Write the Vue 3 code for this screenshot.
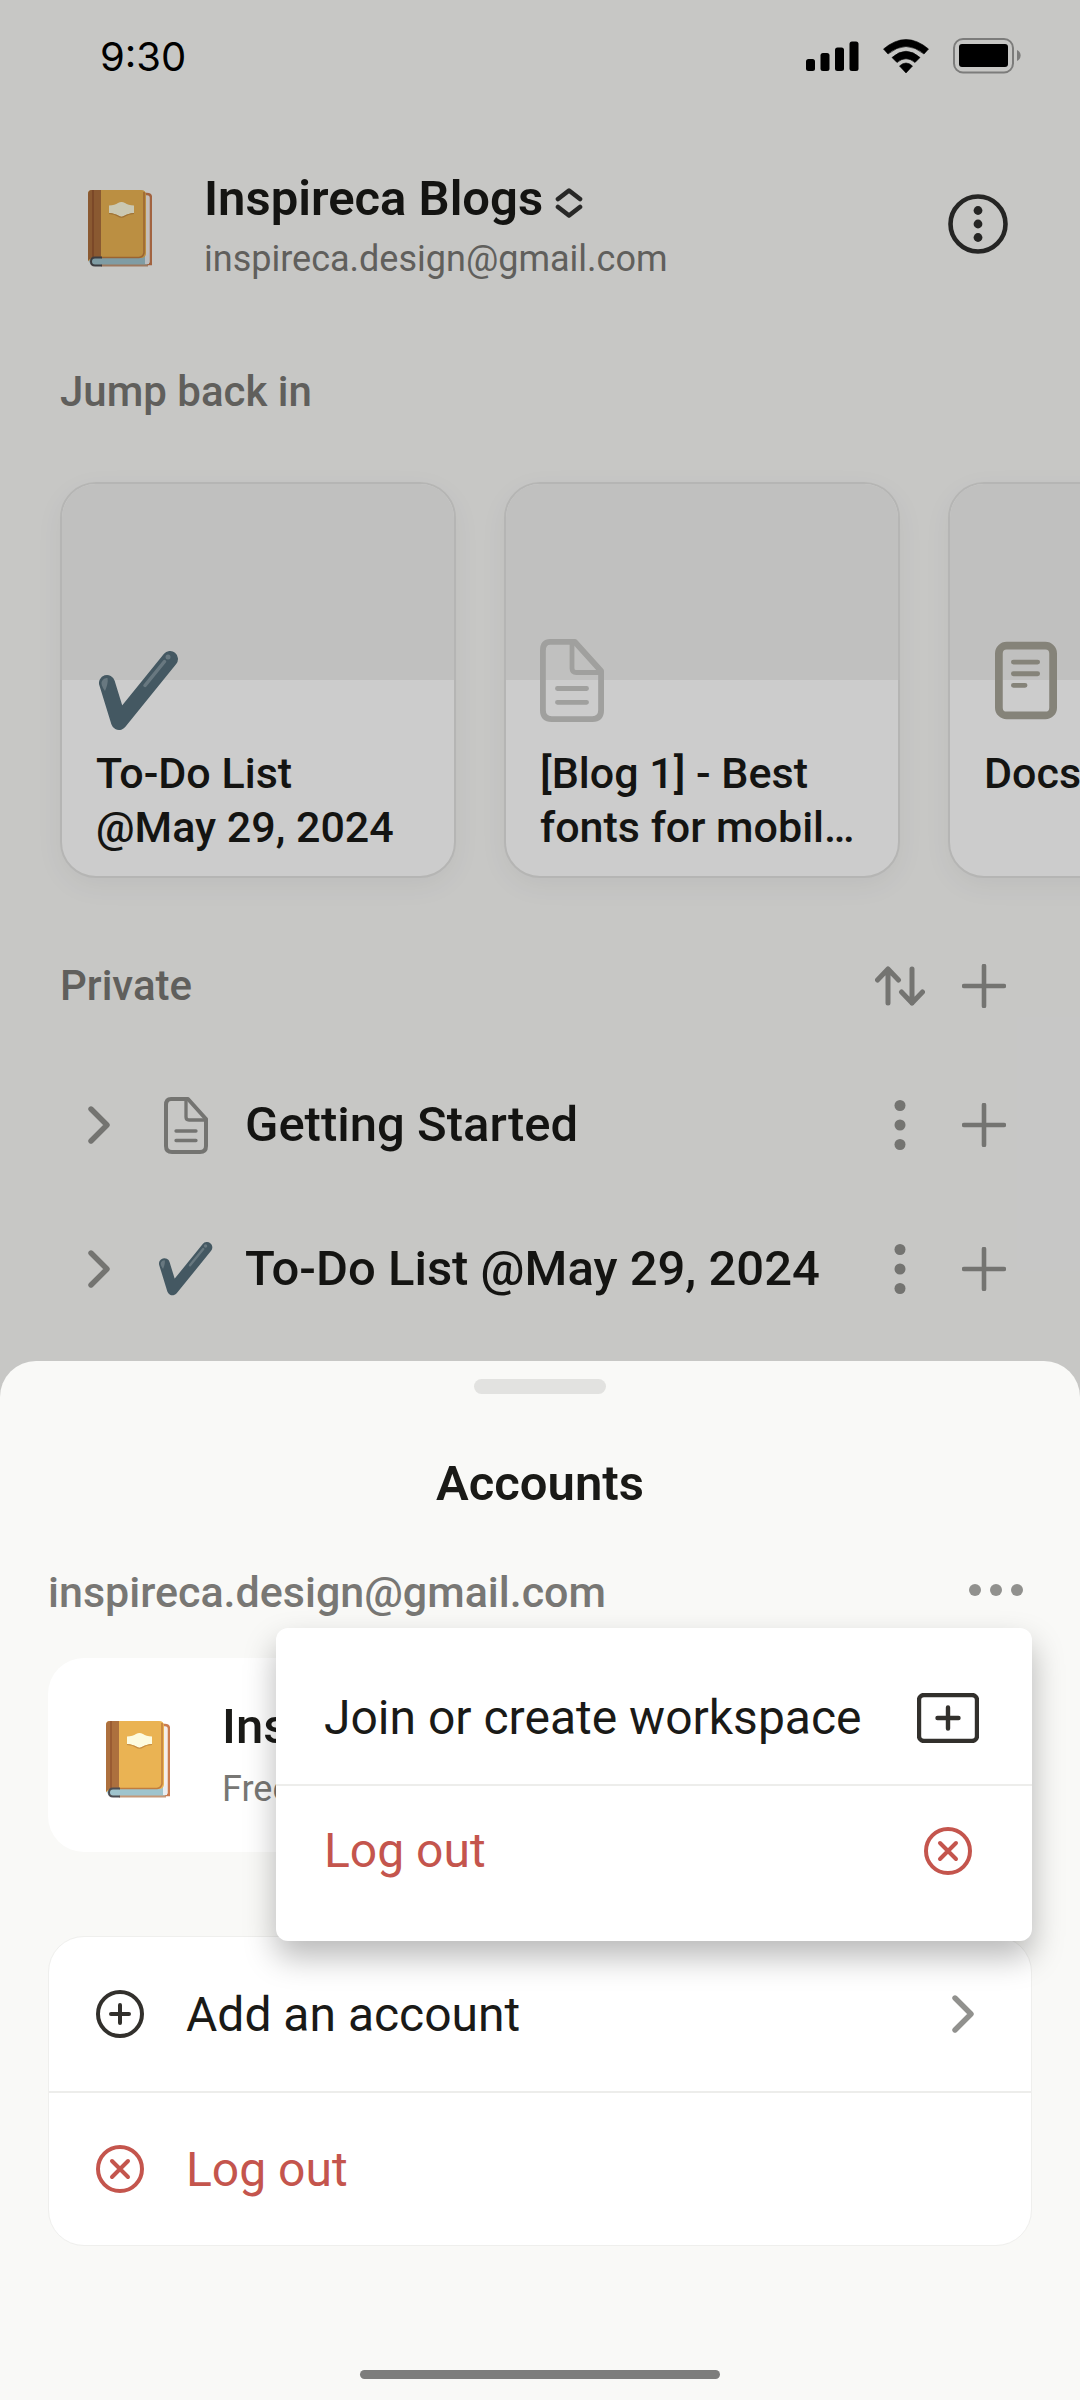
<script setup>
import { ref } from 'vue'

const email = 'inspireca.design@gmail.com'
const recents = [
  { icon: 'check', title: 'To-Do List @May 29, 2024' },
  { icon: 'page', title: '[Blog 1] - Best fonts for mobile apps' },
  { icon: 'docs', title: 'Docs' }
]
const pages = [
  { icon: 'page', title: 'Getting Started' },
  { icon: 'check', title: 'To-Do List @May 29, 2024' }
]
const menuOpen = ref(true)
</script>

<template>
  <svg class="sprite" aria-hidden="true">
    <symbol id="book" viewBox="0 0 64 77">
      <path d="M54 4h5q4 0 4 4v66H8" fill="#f5eee9" stroke="#cb7c50" stroke-width="2.5" />
      <path d="M6 66h53v9H6q-5 0-5-5t5-4z" fill="#9fc4cd" />
      <path d="M57 66q3-1 4-4v12h-4z" fill="#e8edf1" />
      <path d="M13 75.500H60" stroke="#c59878" stroke-width="2" />
      <path d="M4 0h49q5 0 5 5v58q0 5-5 5H6L0 71V4q0-4 4-4z" fill="#eab353" />
      <path d="M56 2v61q-1 4-5 4.500H13" fill="none" stroke="#c17d3f" stroke-width="1.500" />
      <path d="M4 0h9v68H7q-7 0-7 4V4q0-4 4-4z" fill="#ad703e" />
      <path d="M5 0v67" stroke="#95552f" stroke-width="1.500" />
      <path d="M14 67.500H7q-4 0-4 4t4 4h7" fill="none" stroke="#4c4d52" stroke-width="2" />
      <path d="M21 15.500Q27 15 30 13Q33.500 11 37 13Q40 15 46 15.500V23Q40 23.500 37 25.500Q33.500 28 30 25.500Q27 23.500 21 23Z" fill="#fdfbdf" />
      <path d="M21 23.500Q27 24 30 26Q33.500 28.500 37 26Q40 24 46 23.500" fill="none" stroke="#c58d42" stroke-width="1.200" />
    </symbol>
    <symbol id="check" viewBox="0 0 80 80">
      <path d="M8 32L20 71L71 8" fill="none" stroke="#566f7b" stroke-width="16" stroke-linecap="round" stroke-linejoin="round" />
      <path d="M46 34.500L65.500 10.500" stroke="#8397a0" stroke-width="3.500" stroke-linecap="round" />
      <circle cx="69" cy="6" r="2.500" fill="#8397a0" />
      <path d="M8.500 27q1 5-2.500 13Q1 33 3 30q2-3.500 5.500-3z" fill="#8397a0" />
    </symbol>
    <symbol id="page" viewBox="0 0 44 57">
      <path d="M7 2H24L42 22V49q0 6-6 6H8q-6 0-6-6V8q0-6 5-6z" fill="none" stroke="currentColor" stroke-width="4" stroke-linejoin="round" />
      <path d="M22 3V20q0 3 3 3H41M12 34H32M12 43.500H32" fill="none" stroke="currentColor" stroke-width="3.300" stroke-linecap="round" />
    </symbol>
    <symbol id="docs" viewBox="0 0 64 80">
      <rect x="4" y="4" width="56" height="72" rx="8" fill="none" stroke="#a7a498" stroke-width="8" />
      <path d="M19 21H44M19 33H44M19 45H31" fill="none" stroke="#a7a498" stroke-width="5" stroke-linecap="round" />
    </symbol>
    <symbol id="plus" viewBox="0 0 44 44">
      <path d="M22 2V42M2 22H42" stroke="currentColor" stroke-width="4.600" stroke-linecap="round" />
    </symbol>
    <symbol id="chevron" viewBox="0 0 22 38">
      <path d="M3 3L19 19L3 35" fill="none" stroke="currentColor" stroke-width="5.400" stroke-linecap="round" stroke-linejoin="round" />
    </symbol>
    <symbol id="more" viewBox="0 0 12 50">
      <circle cx="6" cy="5.500" r="5.500" fill="currentColor" />
      <circle cx="6" cy="25" r="5.500" fill="currentColor" />
      <circle cx="6" cy="44.500" r="5.500" fill="currentColor" />
    </symbol>
    <symbol id="circle-x" viewBox="0 0 48 48">
      <circle cx="24" cy="24" r="22" fill="none" stroke="currentColor" stroke-width="4" />
      <path d="M16 16L32 32M32 16L16 32" stroke="currentColor" stroke-width="4" stroke-linecap="round" />
    </symbol>
  </svg>

  <div class="screen">
    <main class="home">
      <div class="status">
        <time>9:30</time>
        <svg class="status-icons" width="216" height="36" viewBox="0 0 216 36">
          <rect x="0" y="21" width="9" height="12" rx="2.500" />
          <rect x="14.500" y="15" width="9" height="18" rx="2.500" />
          <rect x="29" y="9.500" width="9" height="23.500" rx="2.500" />
          <rect x="43.500" y="3.500" width="9" height="29.500" rx="2.500" />
          <path d="M77.500 11Q100 -8 122.500 11L118 16Q100 1 82 16ZM86 19.500Q100 7 114 19.500L109 24.500Q100 17 91 24.500ZM93.500 28Q100 22 106.500 28L100 35Z" stroke="#000" stroke-width=".6" stroke-linejoin="round" />
          <rect x="148" y="1" width="59" height="33.500" rx="9" fill="none" stroke="#9c9c9a" stroke-width="2" />
          <rect x="153" y="6" width="49" height="23" rx="3" />
          <path d="M211 12a6 6 0 0 1 0 11z" fill="#9c9c9a" />
        </svg>
      </div>

      <header class="workspace">
        <svg class="book"><use href="#book" /></svg>
        <div class="identity">
          <button class="switcher" type="button">
            Inspireca Blogs
            <svg class="updown" width="28" height="30" viewBox="0 0 28 30" fill="none" stroke="#333331" stroke-width="4.600" stroke-linecap="round" stroke-linejoin="round">
              <path d="M3 11L14 2.500L25 11M3 19L14 27.500L25 19" />
            </svg>
          </button>
          <p class="address">{{ email }}</p>
        </div>
        <button class="options" type="button" aria-label="Workspace options">
          <svg width="60" height="60" viewBox="0 0 60 60" fill="#2f2f2d">
            <circle cx="30" cy="30" r="27.500" fill="none" stroke="#2f2f2d" stroke-width="4.600" />
            <circle cx="30" cy="16.500" r="4.400" />
            <circle cx="30" cy="30" r="4.400" />
            <circle cx="30" cy="43.500" r="4.400" />
          </svg>
        </button>
      </header>

      <h2 class="section-title">Jump back in</h2>
      <div class="recents">
        <a v-for="item in recents" :key="item.title" class="recent" href="#">
          <span class="cover"></span>
          <svg class="recent-icon" :class="item.icon"><use :href="'#' + item.icon" /></svg>
          <span class="recent-title">{{ item.title }}</span>
        </a>
      </div>

      <div class="section-head">
        <h2 class="section-title">Private</h2>
        <button class="tool" type="button" aria-label="Sort pages">
          <svg width="50" height="40" viewBox="0 0 50 40" fill="none" stroke="currentColor" stroke-width="5" stroke-linecap="round" stroke-linejoin="round">
            <path d="M13 37V3M2.500 14L13 3L23.500 14M37 3V37M26.500 26L37 37L47.500 26" />
          </svg>
        </button>
        <button class="tool" type="button" aria-label="Add page">
          <svg class="plus"><use href="#plus" /></svg>
        </button>
      </div>

      <ul class="pages">
        <li v-for="page in pages" :key="page.title" class="page-row">
          <button class="expand" type="button" aria-label="Expand">
            <svg class="chevron"><use href="#chevron" /></svg>
          </button>
          <span class="page-icon">
            <svg :class="page.icon"><use :href="'#' + page.icon" /></svg>
          </span>
          <a class="page-title" href="#">{{ page.title }}</a>
          <button class="tool" type="button" aria-label="Page options">
            <svg class="more"><use href="#more" /></svg>
          </button>
          <button class="tool" type="button" aria-label="Add subpage">
            <svg class="plus"><use href="#plus" /></svg>
          </button>
        </li>
      </ul>
    </main>

    <div class="scrim">
      <section class="sheet" aria-label="Accounts">
        <div class="handle"></div>
        <h1 class="sheet-title">Accounts</h1>

        <div class="account">
          <span class="account-email">{{ email }}</span>
          <button class="account-more" type="button" aria-label="Account options" @click="menuOpen = !menuOpen">
            <svg width="54" height="12" viewBox="0 0 54 12" fill="currentColor">
              <circle cx="6" cy="6" r="6" />
              <circle cx="27" cy="6" r="6" />
              <circle cx="48" cy="6" r="6" />
            </svg>
          </button>
          <div v-if="menuOpen" class="menu">
            <button class="menu-item" type="button">
              Join or create workspace
              <svg width="62" height="50" viewBox="0 0 62 50" fill="none" stroke="#32302c" stroke-width="4.400" stroke-linecap="round">
                <rect x="2" y="2" width="58" height="46" rx="5" />
                <path d="M31 14.500V35.500M20.500 25H41.500" />
              </svg>
            </button>
            <button class="menu-item danger" type="button">
              Log out
              <svg class="round-icon"><use href="#circle-x" /></svg>
            </button>
          </div>
        </div>

        <a class="card current" href="#">
          <svg class="book"><use href="#book" /></svg>
          <span class="current-text">
            <strong class="current-name">Inspireca Blogs</strong>
            <span class="address">Free Plan</span>
          </span>
        </a>

        <div class="card actions">
          <button class="action" type="button">
            <svg class="round-icon" viewBox="0 0 48 48" fill="none" stroke="#32302c" stroke-width="4" stroke-linecap="round">
              <circle cx="24" cy="24" r="22" />
              <path d="M24 15V33M15 24H33" />
            </svg>
            <span class="action-label">Add an account</span>
            <svg class="chevron"><use href="#chevron" /></svg>
          </button>
          <button class="action danger" type="button">
            <svg class="round-icon"><use href="#circle-x" /></svg>
            <span class="action-label">Log out</span>
          </button>
        </div>

        <div class="home-indicator"></div>
      </section>
    </div>
  </div>
</template>

<style>
body {
  margin: 0;
  background: #f9f9f7;
}
</style>

<style scoped>
.screen {
  position: relative;
  min-height: 100vh;
  overflow: hidden;
  background: #f9f9f7;
  color: #1a1a17;
  font-family: Roboto, "Liberation Sans", sans-serif;
}
.sprite {
  position: absolute;
  width: 0;
  height: 0;
}
svg {
  display: block;
  flex: none;
}
h1,
h2,
p,
ul {
  margin: 0;
  padding: 0;
}
button {
  display: flex;
  align-items: center;
  padding: 0;
  border: 0;
  background: none;
  color: inherit;
  font: inherit;
  text-align: left;
}
a {
  color: inherit;
  text-decoration: none;
}

.status {
  display: flex;
  justify-content: space-between;
  align-items: center;
  height: 112px;
  padding: 0 58px 0 100px;
  color: #000;
  font-size: 40px;
  font-family: Inter, sans-serif;
}

.workspace {
  display: flex;
  align-items: center;
  height: 112px;
  margin-top: 56px;
  padding: 0 72px 0 88px;
}
.book {
  width: 64px;
  height: 77px;
  margin-top: 8px;
}
.identity {
  flex: 1;
  margin-left: 52px;
  padding-top: 6px;
}
.switcher {
  gap: 12px;
  font-size: 49px;
  font-weight: 600;
  line-height: 64px;
}
.updown {
  margin-top: 8px;
}
.address {
  color: #787774;
  font-size: 36px;
  line-height: 56px;
}

.section-title {
  color: #787774;
  font-size: 42px;
  font-weight: 500;
  line-height: 56px;
}
.home > .section-title {
  margin: 84px 60px 0;
}

.recents {
  display: flex;
  gap: 48px;
  margin-top: 62px;
  padding-left: 60px;
}
.recent {
  position: relative;
  display: flex;
  flex: none;
  flex-direction: column;
  box-sizing: border-box;
  width: 396px;
  height: 396px;
  overflow: hidden;
  border: 2px solid #e3e3e1;
  border-radius: 36px;
  background: #fff;
  box-shadow: 0 8px 28px rgba(15, 15, 15, 0.05);
}
.cover {
  height: 196px;
  background: #f1f1ef;
}
.recent-icon {
  width: 80px;
  height: 80px;
  margin: -29px 0 0 37px;
}
.recent-icon.page {
  width: 64px;
  height: 83px;
  margin: -41px 0 9px 34px;
  color: #c8c8c6;
}
.recent-icon.docs {
  width: 62px;
  height: 79px;
  margin: -39px 0 11px 45px;
}
.recent-title {
  display: -webkit-box;
  margin: 15px 40px 0 34px;
  overflow: hidden;
  -webkit-box-orient: vertical;
  -webkit-line-clamp: 2;
  font-size: 43px;
  font-weight: 500;
  line-height: 54px;
}

.section-head {
  display: flex;
  align-items: center;
  margin-top: 80px;
  padding: 0 54px 0 60px;
}
.section-head .section-title {
  flex: 1;
}
.tool {
  justify-content: center;
  width: 84px;
  height: 56px;
  color: #91918e;
}
.plus {
  width: 44px;
  height: 44px;
}
.more {
  width: 12px;
  height: 50px;
}
.chevron {
  width: 22px;
  height: 38px;
  color: #91918e;
}

.pages {
  margin-top: 39px;
  list-style: none;
}
.page-row {
  display: flex;
  align-items: center;
  height: 144px;
  padding: 0 54px 0 88px;
}
.expand {
  width: 70px;
}
.page-icon {
  display: flex;
  justify-content: center;
  width: 56px;
  color: #91918e;
}
.page-icon .page {
  width: 44px;
  height: 57px;
}
.page-icon .check {
  width: 54px;
  height: 54px;
}
.page-title {
  flex: 1;
  margin-left: 31px;
  font-size: 49px;
  font-weight: 500;
  line-height: 64px;
}

.scrim {
  position: absolute;
  inset: 0;
  display: flex;
  flex-direction: column;
  justify-content: flex-end;
  background: rgba(0, 0, 0, 0.2);
}
.sheet {
  padding: 18px 48px 21px;
  border-radius: 36px 36px 0 0;
  background: #f9f9f7;
}
.handle {
  width: 132px;
  height: 15px;
  margin: 0 auto;
  border-radius: 8px;
  background: #e2e2e0;
}
.sheet-title {
  margin-top: 58px;
  font-size: 49px;
  font-weight: 600;
  line-height: 64px;
  text-align: center;
}
.account {
  position: relative;
  display: flex;
  justify-content: space-between;
  align-items: center;
  margin-top: 48px;
  color: #787774;
  font-size: 43px;
  line-height: 56px;
}
.account-email {
  font-weight: 500;
}
.account-more {
  height: 56px;
  padding: 0 9px 4px 0;
  color: #91918e;
}
.menu {
  position: absolute;
  top: 64px;
  right: 0;
  z-index: 1;
  box-sizing: border-box;
  width: 756px;
  height: 313px;
  padding: 24px 0;
  border-radius: 12px;
  background: #fff;
  box-shadow: 0 16px 32px rgba(0, 0, 0, 0.28);
  color: #1a1a17;
}
.menu-item {
  justify-content: space-between;
  box-sizing: border-box;
  width: 100%;
  height: 132px;
  padding: 0 53px 0 48px;
  font-size: 48px;
}
.menu-item + .menu-item {
  border-top: 2px solid #ededeb;
  padding-right: 60px;
}
.danger {
  color: #c4554d;
}
.round-icon {
  width: 48px;
  height: 48px;
}

.card {
  border-radius: 36px;
  background: #fff;
}
.current {
  display: flex;
  align-items: center;
  height: 194px;
  margin-top: 38px;
  padding: 0 58px;
}
.current-text {
  display: flex;
  flex-direction: column;
  gap: 2px;
  margin-left: 52px;
  padding-top: 2px;
}
.current-name {
  font-size: 49px;
  font-weight: 500;
  line-height: 64px;
}
.actions {
  margin-top: 84px;
  border: 1px solid #efefed;
}
.action {
  box-sizing: border-box;
  width: 100%;
  height: 154px;
  padding: 0 57px 0 47px;
  font-size: 48px;
}
.action + .action {
  border-top: 2px solid #ededeb;
}
.action-label {
  flex: 1;
  margin-left: 42px;
}
.home-indicator {
  width: 360px;
  height: 9px;
  margin: 124px auto 0;
  border-radius: 5px;
  background: #7d7d7c;
}
</style>
